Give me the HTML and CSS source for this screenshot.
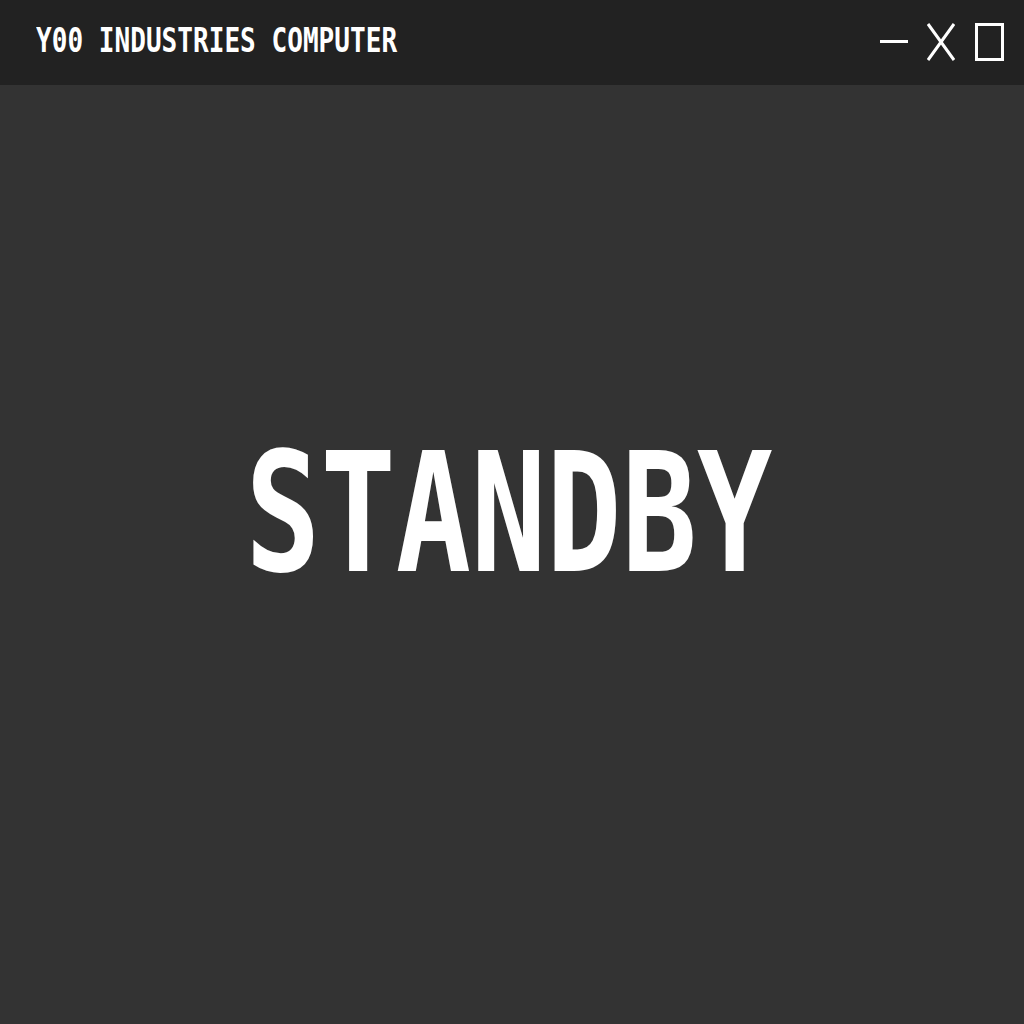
FILE: index.html
```html
<!DOCTYPE html>
<html>
<head>
<meta charset="utf-8">
<link rel="stylesheet" href="styles.css">
</head>
<body>
<div class="window">
  <header class="titlebar">
    <div class="title">Y00 INDUSTRIES COMPUTER</div>
    <div class="controls">
      <svg class="icon" width="28" height="40" viewBox="0 0 28 40"><line x1="0" y1="18.5" x2="28" y2="18.5" stroke="#fff" stroke-width="3"/></svg>
      <svg class="icon" width="28" height="40" viewBox="0 0 28 40"><path d="M1 1 L27 37 M27 1 L1 37" stroke="#fff" stroke-width="3" fill="none"/></svg>
      <svg class="icon" width="30" height="40" viewBox="0 0 30 40"><rect x="1.5" y="1.5" width="26" height="35" stroke="#fff" stroke-width="3" fill="none"/></svg>
    </div>
  </header>
  <main class="screen">
    <div class="status">STANDBY</div>
  </main>
</div>
</body>
</html>
```
FILE: styles.css
```css
html, body {
  margin: 0;
  padding: 0;
  background: #333333;
}
.window {
  width: 1024px;
  height: 1024px;
  display: flex;
  flex-direction: column;
}
.titlebar {
  height: 85px;
  flex: none;
  background: #222222;
  display: flex;
  align-items: center;
  justify-content: space-between;
  padding: 0 19px 0 36px;
  box-sizing: border-box;
}
.title {
  font-family: "DejaVu Sans Mono", monospace;
  font-weight: bold;
  font-size: 34px;
  color: #ffffff;
  transform: scaleX(0.767);
  transform-origin: left center;
  white-space: nowrap;
  line-height: 1;
  margin-top: -6px;
}
.controls {
  display: flex;
  align-items: center;
  gap: 19px;
  margin-top: 1px;
}
.controls .icon:last-child {
  margin-left: 1px;
}
.icon {
  display: block;
}
.screen {
  flex: 1;
  display: flex;
  align-items: center;
  justify-content: center;
  padding-bottom: 80px;
}
.status {
  font-family: "DejaVu Sans Mono", monospace;
  font-weight: bold;
  font-size: 165px;
  line-height: 1;
  color: #ffffff;
  transform: scaleX(0.758);
  white-space: nowrap;
  margin-left: -6px;
}
```
